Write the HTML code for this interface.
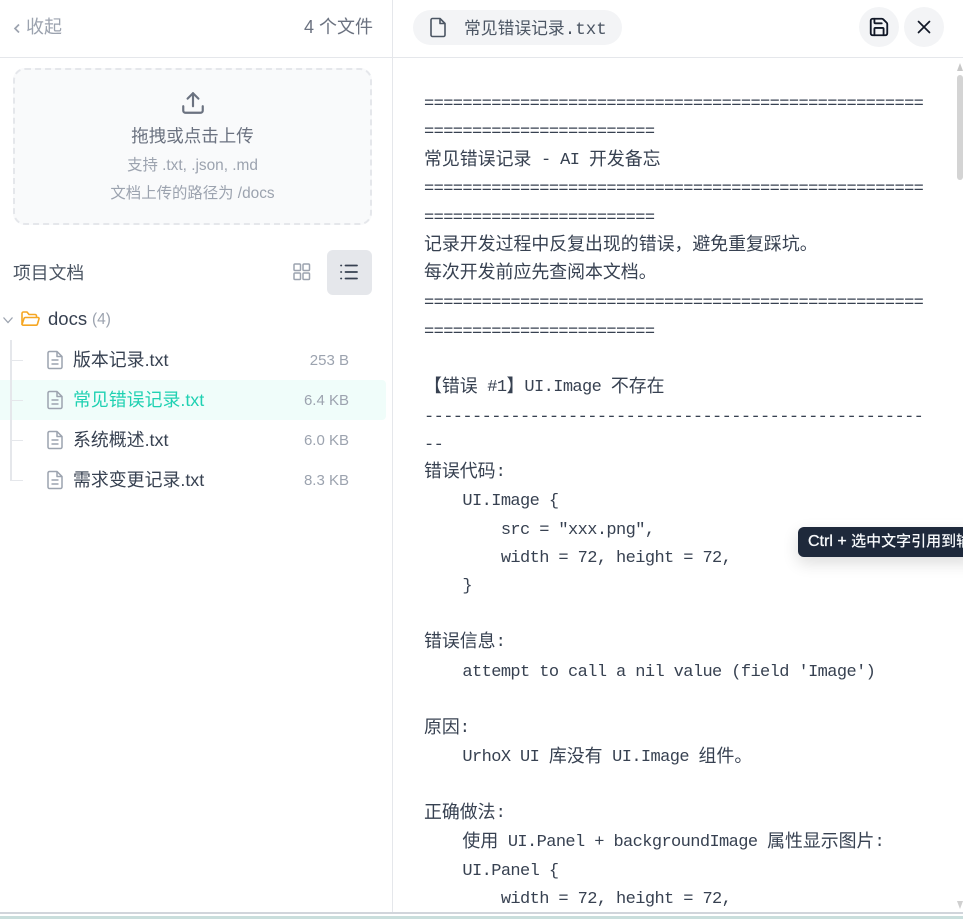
<!DOCTYPE html>
<html lang="zh">
<head>
<meta charset="utf-8">
<title>常见错误记录</title>
<style>
html,body{margin:0;padding:0;background:#fff;}
body{width:963px;height:919px;overflow:hidden;position:relative;font-family:"Liberation Sans","Noto Sans CJK SC",sans-serif;}
.a{position:absolute;white-space:pre;}
svg{position:absolute;display:block;}
.t{position:absolute;white-space:pre;height:28px;line-height:28px;}
.l{position:absolute;left:424px;white-space:pre;height:28px;line-height:28px;font-family:"Liberation Mono","Noto Sans CJK SC",monospace;font-size:17px;letter-spacing:-.6px;color:#374151;}
.l b{font-weight:400;font-size:17.9px;letter-spacing:0;font-family:"Noto Sans CJK SC",sans-serif;position:relative;top:1px;}
.pill b{font-weight:400;font-size:16.8px;font-family:"Noto Sans CJK SC",sans-serif;}
.name{font-size:17.9px;color:#374151;left:73px;}
.size{font-size:15px;color:#9ca3af;right:614px;}
.tick{position:absolute;left:11px;width:12px;height:1px;background:#e5e7eb;}
</style>
</head>
<body>
<!-- sidebar -->
<div class="a" style="left:392px;top:0;width:1px;height:912px;background:#e5e7eb"></div>
<div class="a" style="left:0;top:57px;width:963px;height:1px;background:#e5e7eb"></div>

<svg style="left:13px;top:23px" width="8" height="10" viewBox="0 0 8 10" fill="none" stroke="#9ca3af" stroke-width="1.700"><path d="M6 1.500 2 5.500 6 9.500"/></svg>
<div class="t" style="left:26px;top:13px;font-size:18px;color:#9ca3af">收起</div>
<div class="t" style="right:590px;top:13px;font-size:18px;color:#6b7280">4 个文件</div>

<div class="a" style="left:13px;top:68px;width:355px;height:153px;background:#f9fafb;border:2px dashed #e5e7eb;border-radius:12px"></div>
<svg style="left:180px;top:90px" width="26" height="26" viewBox="0 0 24 24" fill="none" stroke="#6b7280" stroke-width="2" stroke-linecap="round" stroke-linejoin="round"><path d="M3 15v4a2 2 0 0 0 2 2h14a2 2 0 0 0 2-2v-4"/><path d="M17 8l-5-5-5 5"/><path d="M12 3v12"/></svg>
<div class="t" style="left:13px;width:359px;text-align:center;top:122px;font-size:17.500px;color:#6b7280">拖拽或点击上传</div>
<div class="t" style="left:13px;width:359px;text-align:center;top:152px;font-size:15.400px;color:#9ca3af">支持 .txt, .json, .md</div>
<div class="t" style="left:13px;width:359px;text-align:center;top:180px;font-size:15.400px;color:#9ca3af">文档上传的路径为 /docs</div>

<div class="t" style="left:13px;top:259px;font-size:17.800px;color:#4b5563">项目文档</div>
<svg style="left:292px;top:262px" width="20" height="20" viewBox="0 0 20 20" fill="none" stroke="#9ca3af" stroke-width="1.500"><rect x="2" y="2" width="6.500" height="6.500" rx="1"/><rect x="11" y="2" width="6.500" height="6.500" rx="1"/><rect x="2" y="11" width="6.500" height="6.500" rx="1"/><rect x="11" y="11" width="6.500" height="6.500" rx="1"/></svg>
<div class="a" style="left:327px;top:250px;width:45px;height:45px;background:#e5e7eb;border-radius:6px"></div>
<svg style="left:339px;top:262px" width="20" height="20" viewBox="0 0 20 20" fill="none" stroke="#374151" stroke-width="1.800" stroke-linecap="round"><path d="M6.500 3.500H18M6.500 10H18M6.500 16.500H18"/><path d="M2 3.500h.3M2 10h.3M2 16.500h.3"/></svg>

<svg style="left:2px;top:314px" width="12" height="12" viewBox="0 0 12 12" fill="none" stroke="#9ca3af" stroke-width="1.300"><path d="M1.500 3.500 6 8.500 10.500 3.500"/></svg>
<svg style="left:20px;top:309px" width="20" height="20" viewBox="0 0 20 20" fill="none" stroke="#f5a623" stroke-width="1.600" stroke-linejoin="round"><path d="M2 15.500V4.500a1.500 1.500 0 0 1 1.500-1.500H7l2 2.500h6A1.500 1.500 0 0 1 16.500 7v1.500"/><path d="M2 15.500 4 9.500a1.500 1.500 0 0 1 1.400-1H18a1 1 0 0 1 1 1.300l-1.500 5.200a1.500 1.500 0 0 1-1.400 1.200H3.500A1.500 1.500 0 0 1 2 15.500z"/></svg>
<div class="t" style="left:48px;top:305px;font-size:18.500px;color:#374151">docs</div>
<div class="t" style="left:92px;top:306px;font-size:15.500px;color:#9ca3af">(4)</div>

<div class="a" style="left:0;top:380px;width:386px;height:40px;background:#f0fdfa;border-radius:0 4px 4px 0"></div>

<div class="a" style="left:10px;top:340px;width:2px;height:141px;background:#e5e7eb"></div>
<div class="tick" style="top:360px"></div>
<div class="tick" style="top:400px"></div>
<div class="tick" style="top:440px"></div>
<div class="tick" style="top:480px"></div>

<svg style="left:46px;top:350px" width="18" height="20" viewBox="0 0 18 20" fill="none" stroke="#9ca3af" stroke-width="1.500" stroke-linejoin="round"><path d="M2 3a1.500 1.500 0 0 1 1.500-1.500H11L16 6.500V17a1.500 1.500 0 0 1-1.500 1.500h-11A1.500 1.500 0 0 1 2 17z"/><path d="M11 1.500V6.500H16M5.500 10h7M5.500 14h7"/></svg>
<div class="t name" style="top:346px">版本记录.txt</div>
<div class="t size" style="top:347px">253 B</div>

<svg style="left:46px;top:390px" width="18" height="20" viewBox="0 0 18 20" fill="none" stroke="#9ca3af" stroke-width="1.500" stroke-linejoin="round"><path d="M2 3a1.500 1.500 0 0 1 1.500-1.500H11L16 6.500V17a1.500 1.500 0 0 1-1.500 1.500h-11A1.500 1.500 0 0 1 2 17z"/><path d="M11 1.500V6.500H16M5.500 10h7M5.500 14h7"/></svg>
<div class="t name" style="top:386px;color:#1fd1b2">常见错误记录.txt</div>
<div class="t size" style="top:387px">6.4 KB</div>

<svg style="left:46px;top:430px" width="18" height="20" viewBox="0 0 18 20" fill="none" stroke="#9ca3af" stroke-width="1.500" stroke-linejoin="round"><path d="M2 3a1.500 1.500 0 0 1 1.500-1.500H11L16 6.500V17a1.500 1.500 0 0 1-1.500 1.500h-11A1.500 1.500 0 0 1 2 17z"/><path d="M11 1.500V6.500H16M5.500 10h7M5.500 14h7"/></svg>
<div class="t name" style="top:426px">系统概述.txt</div>
<div class="t size" style="top:427px">6.0 KB</div>

<svg style="left:46px;top:470px" width="18" height="20" viewBox="0 0 18 20" fill="none" stroke="#9ca3af" stroke-width="1.500" stroke-linejoin="round"><path d="M2 3a1.500 1.500 0 0 1 1.500-1.500H11L16 6.500V17a1.500 1.500 0 0 1-1.500 1.500h-11A1.500 1.500 0 0 1 2 17z"/><path d="M11 1.500V6.500H16M5.500 10h7M5.500 14h7"/></svg>
<div class="t name" style="top:466px">需求变更记录.txt</div>
<div class="t size" style="top:467px">8.3 KB</div>

<!-- header right -->
<div class="a" style="left:413px;top:10px;width:209px;height:35px;background:#f3f4f6;border-radius:18px"></div>
<svg style="left:427px;top:16px" width="22" height="23" viewBox="0 0 22 23" fill="none" stroke="#4b5563" stroke-width="1.600" stroke-linejoin="round"><path d="M4 4a1.500 1.500 0 0 1 1.500-1.500H13L18 7.500V19a1.500 1.500 0 0 1-1.500 1.500h-11A1.500 1.500 0 0 1 4 19z"/><path d="M13 2.500V7.500H18"/></svg>
<div class="t pill" style="left:464px;top:13px;font-family:'Liberation Mono','Noto Sans CJK SC',monospace;font-size:17.500px;color:#4b5563"><b>常见错误记录</b>.txt</div>

<div class="a" style="left:859px;top:7px;width:40px;height:40px;background:#f3f4f6;border-radius:50%"></div>
<svg style="left:868px;top:16px" width="22" height="22" viewBox="0 0 24 24" fill="none" stroke="#111827" stroke-width="2" stroke-linejoin="round" stroke-linecap="round"><path d="M15.200 3a2 2 0 0 1 1.400.6l3.800 3.800a2 2 0 0 1 .6 1.400V19a2 2 0 0 1-2 2H5a2 2 0 0 1-2-2V5a2 2 0 0 1 2-2z"/><path d="M17 21v-7a1 1 0 0 0-1-1H8a1 1 0 0 0-1 1v7"/><path d="M7 3v4a1 1 0 0 0 1 1h7"/></svg>
<div class="a" style="left:904px;top:7px;width:40px;height:40px;background:#f3f4f6;border-radius:50%"></div>
<svg style="left:913px;top:16px" width="22" height="22" viewBox="0 0 22 22" fill="none" stroke="#111827" stroke-width="1.700" stroke-linecap="round"><path d="M5.500 5.500 16.500 16.500M16.500 5.500 5.500 16.500"/></svg>

<!-- scrollbar -->
<div class="a" style="left:957px;top:63px;width:0;height:0;border-left:3px solid transparent;border-right:3px solid transparent;border-bottom:8px solid #c8c8c8"></div>
<div class="a" style="left:957px;top:75px;width:6px;height:105px;background:#d4d4d4;border-radius:3px"></div>
<div class="a" style="left:957px;top:901px;width:0;height:0;border-left:3px solid transparent;border-right:3px solid transparent;border-top:8px solid #d0d0d0"></div>

<!-- content -->
<div class="l" style="top:91px">====================================================</div>
<div class="l" style="top:119px">========================</div>
<div class="l" style="top:143px"><b>常见错误记录</b> - AI <b>开发备忘</b></div>
<div class="l" style="top:176px">====================================================</div>
<div class="l" style="top:205px">========================</div>
<div class="l" style="top:228px"><b>记录开发过程中反复出现的错误，避免重复踩坑。</b></div>
<div class="l" style="top:256px"><b>每次开发前应先查阅本文档。</b></div>
<div class="l" style="top:290px">====================================================</div>
<div class="l" style="top:319px">========================</div>
<div class="l" style="top:370px"><b>【错误</b> #1<b>】</b>UI.Image <b>不存在</b></div>
<div class="l" style="top:404px">----------------------------------------------------</div>
<div class="l" style="top:432px">--</div>
<div class="l" style="top:455px"><b>错误代码</b>:</div>
<div class="l" style="top:488px">    UI.Image {</div>
<div class="l" style="top:517px">        src = "xxx.png",</div>
<div class="l" style="top:545px">        width = 72, height = 72,</div>
<div class="l" style="top:573px">    }</div>
<div class="l" style="top:625px"><b>错误信息</b>:</div>
<div class="l" style="top:659px">    attempt to call a nil value (field 'Image')</div>
<div class="l" style="top:711px"><b>原因</b>:</div>
<div class="l" style="top:740px">    UrhoX UI <b>库没有</b> UI.Image <b>组件。</b></div>
<div class="l" style="top:796px"><b>正确做法</b>:</div>
<div class="l" style="top:825px">    <b>使用</b> UI.Panel + backgroundImage <b>属性显示图片</b>:</div>
<div class="l" style="top:858px">    UI.Panel {</div>
<div class="l" style="top:886px">        width = 72, height = 72,</div>

<!-- tooltip -->
<div class="a" style="left:798px;top:527px;width:180px;height:30px;background:#1e293b;border-radius:6px;box-shadow:0 6px 16px rgba(0,0,0,.14)"></div>
<div class="t" style="left:808px;top:528px;font-size:15px;font-weight:500;color:#f8fafc"><span style="font-size:16px;-webkit-text-stroke:.3px #f8fafc">Ctrl + </span>选中文字引用到输入框</div>

<!-- bottom edge -->
<div class="a" style="left:0;top:912px;width:963px;height:7px;background:#fff"></div>
<div class="a" style="left:0;top:912px;width:963px;height:2px;background:#d1d5db"></div>
<div class="a" style="left:0;top:916px;width:963px;height:3px;background:#c9dedc"></div>
</body>
</html>
